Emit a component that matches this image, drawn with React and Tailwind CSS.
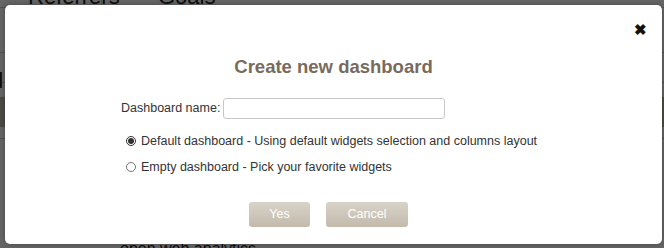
import { useState } from 'react';

function Background() {
  return (
    <div className="absolute inset-0 bg-white text-[#222] flex flex-col">
      {/* tabs strip */}
      <div className="flex h-[28px] -mt-[20px] border-b border-[#ccc] text-[22px] shrink-0">
        <div className="w-[102px] pl-[28px] border-r border-[#ccc]">Referrers</div>
        <div className="w-[81px] border-r border-[#ccc]" />
        <div className="-ml-[25px]">Goals</div>
      </div>
      <div className="h-[45px] border-b border-[#ccc] shrink-0" />
      <div className="h-[30px] border-b border-[#ccc] text-[22px] leading-[20px] pt-[18px] shrink-0 -ml-[9px]">d</div>
      <div className="h-[14px] shrink-0" />
      <div className="h-[30px] bg-[#c0bbad] shrink-0" />
      <div className="h-[12px] border-b border-[#ccc] shrink-0" />
      <div className="flex-1" />
      <div className="pl-[120px] text-[16px] leading-[16px] -mb-[9px] shrink-0">open web analytics</div>
    </div>
  );
}

export default function App() {
  const [name, setName] = useState('');
  const [type, setType] = useState('default');

  return (
    <div className="relative w-[664px] h-[248px] overflow-hidden font-['Liberation_Sans',Arial,sans-serif]">
      <Background />
      <div className="absolute inset-0 bg-black/60" />

      <div className="absolute left-[5px] top-[5px] w-[657px] h-[239px] bg-white rounded-[5px] shadow-[0_0_6px_rgba(0,0,0,0.3)]">
        <button className="absolute right-[15px] top-[17px] text-[15px] leading-none font-bold text-[#111]">
          ✖
        </button>

        <h2 className="mt-[51px] text-center text-[18.5px] leading-[22px] font-bold text-[#786b5c]">Create new dashboard</h2>

        <div className="ml-[116px] mt-[20px] flex items-center text-[12.5px] text-[#333]">
          <label className="mr-[3px]">Dashboard name:</label>
          <input
            value={name}
            onChange={(e) => setName(e.target.value)}
            className="w-[222px] h-[21px] border border-[#c8c8c8] rounded-[3px] px-1 outline-none"
          />
        </div>

        <div className="ml-[121px] mt-[13px] text-[12.5px] text-[#333] flex flex-col gap-[7px]">
          <label className="flex items-center gap-[5px]">
            <input
              type="radio"
              name="dtype"
              checked={type === 'default'}
              onChange={() => setType('default')}
              className="w-[10px] h-[10px] m-0 accent-[#333]"
            />
            Default dashboard - Using default widgets selection and columns layout
          </label>
          <label className="flex items-center gap-[5px]">
            <input
              type="radio"
              name="dtype"
              checked={type === 'empty'}
              onChange={() => setType('empty')}
              className="w-[10px] h-[10px] m-0 accent-[#333]"
            />
            Empty dashboard - Pick your favorite widgets
          </label>
        </div>

        <div className="mt-[25px] flex justify-center gap-[16px] pr-[10px] text-[12.5px] text-white">
          <button className="w-[61px] h-[25px] rounded-[3px] bg-gradient-to-b from-[#d8d3c9] to-[#c3baab]">Yes</button>
          <button className="w-[82px] h-[25px] rounded-[3px] bg-gradient-to-b from-[#d8d3c9] to-[#c3baab]">Cancel</button>
        </div>
      </div>
    </div>
  );
}
